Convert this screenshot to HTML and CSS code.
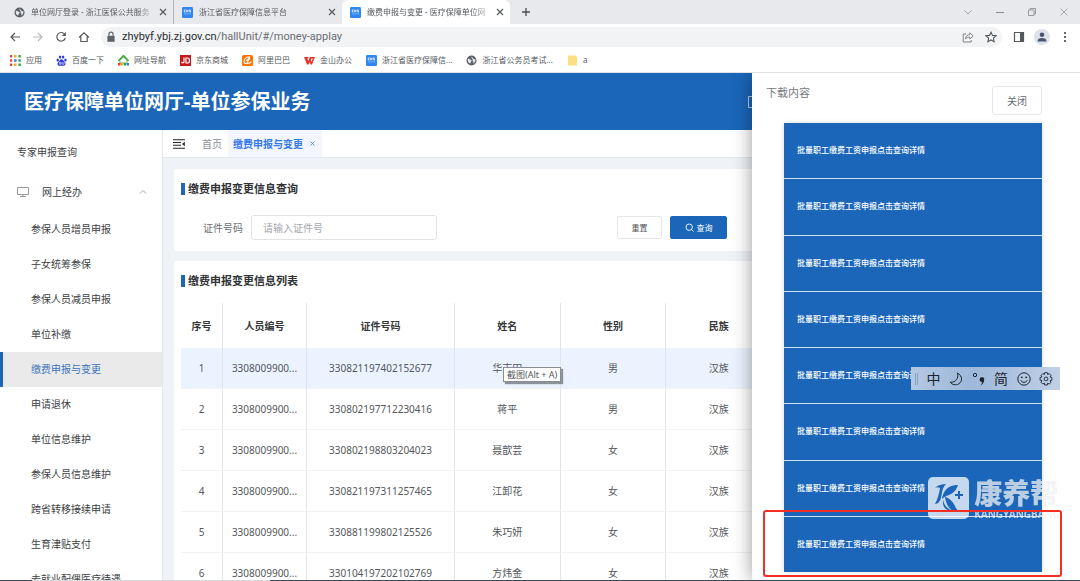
FILE: index.html
```html
<!DOCTYPE html>
<html lang="zh-CN">

	<head>
		<meta charset="UTF-8">
		<title>缴费申报与变更 - 医疗保障单位网厅</title>
		<link rel="stylesheet" href="styles.css">
	</head>

	<body>
		<!-- 公用图标 -->
		<svg class="defs" width="0" height="0">
			<symbol id="globe" viewBox="0 0 12 12">
				<circle cx="6" cy="6" r="5.5" fill="#5f6368" />
				<path d="M2 4.2C3.5 3.8 4 5.2 5.2 5.3c1 .2 1.200 1 .4 1.600C4.800 7.500 5.400 9 4.300 9.300 2.600 8.700 1.600 7 2 4.200zM6 1.500c.2 1.200 1.500.8 1.500 1.900S9.300 4.700 10.300 5c.1 1.800-.7 3.300-2 4.200-.7-.6.300-1.700-.6-2.300-.8-.5-.7-1.500.1-1.900C7 4.500 5.800 3.800 6 1.500z" fill="#e8eaed" />
			</symbol>
			<symbol id="chs" viewBox="0 0 12 12">
				<rect width="12" height="12" rx="1.500" fill="#2f86ee" />
				<path d="M4 3.200H2.500v2.200H4M5 3v2.600M5 4.300h1.600M6.600 3v2.600M9.500 3.200H8v1.100h1.500v1.100H8" fill="none" stroke="#fff" stroke-width=".8" />
				<path d="M2 7.500h8" stroke="#9cc8fa" stroke-width=".7" />
			</symbol>
			<symbol id="close" viewBox="0 0 8 8">
				<path d="M1 1l6 6M7 1L1 7" fill="none" stroke="currentColor" stroke-width="1.200" />
			</symbol>
		</svg>

		<div class="tabs">
			<div class="tab">
				<svg class="ico"><use href="#globe" /></svg>
				<span class="name">单位网厅登录 - 浙江医保公共服务</span>
				<button class="x" aria-label="关闭标签"><svg><use href="#close" /></svg></button>
			</div>
			<div class="tab">
				<svg class="ico"><use href="#chs" /></svg>
				<span class="name">浙江省医疗保障信息平台</span>
				<button class="x" aria-label="关闭标签"><svg><use href="#close" /></svg></button>
			</div>
			<div class="tab on">
				<svg class="ico"><use href="#chs" /></svg>
				<span class="name">缴费申报与变更 - 医疗保障单位网</span>
				<button class="x" aria-label="关闭标签"><svg><use href="#close" /></svg></button>
			</div>
			<button class="plus" aria-label="新标签页"><svg width="10" height="10" viewBox="0 0 10 10"><path d="M5 1v8M1 5h8" stroke="#4a4d51" stroke-width="1.300" /></svg></button>
			<div class="winbtns">
				<button aria-label="搜索标签页"><svg viewBox="0 0 10 10"><path d="M1.500 3.500L5 7l3.500-3.500" fill="none" stroke="#a5a7aa" /></svg></button>
				<button aria-label="最小化"><svg viewBox="0 0 10 10"><path d="M1 5.500h8" stroke="#8b8d90" /></svg></button>
				<button aria-label="还原"><svg viewBox="0 0 10 10"><path d="M1.500 3h5.500v5.500H1.500zM3 3V1.500h5.500V7H7" fill="none" stroke="#999b9e" /></svg></button>
				<button aria-label="关闭"><svg viewBox="0 0 10 10"><path d="M1.500 1.500l7 7M8.500 1.500l-7 7" stroke="#a5a7aa" /></svg></button>
			</div>
		</div>

		<div class="toolbar">
			<button aria-label="后退"><svg viewBox="0 0 12 12"><path d="M11 6H2M6 2L2 6l4 4" fill="none" stroke="#55585c" stroke-width="1.200" /></svg></button>
			<button aria-label="前进"><svg viewBox="0 0 12 12"><path d="M1 6h9M6 2l4 4-4 4" fill="none" stroke="#b8babd" stroke-width="1.200" /></svg></button>
			<button aria-label="刷新"><svg viewBox="0 0 12 12"><path d="M9.800 3.500A4.300 4.300 0 1 0 10.300 7" fill="none" stroke="#55585c" stroke-width="1.200" /><path d="M10.800 1v4H6.800z" fill="#55585c" /></svg></button>
			<button aria-label="主页"><svg viewBox="0 0 12 12"><path d="M1 6.500L6 1.800l5 4.700M2.800 5.500v5h6.400v-5" fill="none" stroke="#55585c" stroke-width="1.200" /></svg></button>
			<div class="address">
				<svg width="8" height="10" viewBox="0 0 8 10"><path d="M1 4h6v5H1z" fill="#5f6368" /><path d="M2.300 4V2.700a1.700 1.700 0 0 1 3.400 0V4" fill="none" stroke="#5f6368" /></svg>
				<span class="url"><b>zhybyf.ybj.zj.gov.cn</b>/hallUnit/#/money-applay</span>
				<button aria-label="分享"><svg viewBox="0 0 12 12"><path d="M4 3H1.200v8h8V9M3.500 8c.3-3 2-4.300 4.300-4.400V1.800L11.200 5 7.800 8V6.200C6 6.200 4.600 6.700 3.500 8z" fill="none" stroke="#77797d" stroke-width=".9" /></svg></button>
				<button aria-label="收藏"><svg viewBox="0 0 12 12"><path d="M6 1.200l1.500 3.200 3.500.4-2.600 2.400.7 3.500L6 9l-3.100 1.700.7-3.500L1 4.800l3.500-.4z" fill="none" stroke="#55585c" stroke-width="1.100" /></svg></button>
			</div>
			<button aria-label="侧边栏"><svg viewBox="0 0 12 12"><path d="M1.500 1.500h9v9h-9z" fill="none" stroke="#55585c" stroke-width="1.200" /><path d="M7 1.500h3.500v9H7z" fill="#55585c" /></svg></button>
			<button class="user" aria-label="用户"><svg viewBox="0 0 12 12"><circle cx="6" cy="3.700" r="2.300" fill="#4a5670" /><path d="M1.500 10.500C1.500 7.800 3.500 7 6 7s4.500.8 4.500 3.500z" fill="#4a5670" /></svg></button>
			<button aria-label="更多"><svg viewBox="0 0 12 12"><path d="M6 1v2M6 5v2M6 9v2" stroke="#55585c" stroke-width="1.800" /></svg></button>
		</div>

		<nav class="marks">
			<a href="#"><svg viewBox="0 0 11 11"><path d="M1 0v11" stroke="#e84335" stroke-width="2.400" stroke-dasharray="2.400 1.900" /><path d="M5.300 0v11" stroke="#f5a623" stroke-width="2.400" stroke-dasharray="2.400 1.900" /><path d="M9.600 0v11" stroke="#34a853" stroke-width="2.400" stroke-dasharray="2.400 1.900" /><path d="M4.100 4.300h2.400v2.400H4.100z" fill="#4285f4" /></svg>应用</a>
			<a href="#"><svg viewBox="0 0 11 11"><g fill="#2c39d8"><ellipse cx="1.700" cy="5" rx="1.200" ry="1.500" /><ellipse cx="4" cy="2" rx="1.200" ry="1.600" /><ellipse cx="7.100" cy="2" rx="1.200" ry="1.600" /><ellipse cx="9.400" cy="5" rx="1.200" ry="1.500" /><path d="M5.500 4.300c1.500 0 2 1.500 3.200 2.700 1.700 1.700.5 4-1.500 3.800-1.200-.2-2.200-.2-3.400 0C1.800 11 .6 8.700 2.300 7c1.200-1.200 1.700-2.700 3.200-2.700z" /></g><path d="M3.500 7.200h1.500v2H3.500zM6.200 7v2.200H8V7" fill="none" stroke="#fff" stroke-width=".6" /></svg>百度一下</a>
			<a href="#"><svg viewBox="0 0 11 11"><path d="M.5 6L5.500.8 10.500 6" fill="none" stroke="#3fa83c" stroke-width="1.800" /><path d="M2 5.500V8h7V5.500" fill="#fff" stroke="#6cbf58" /><path d="M0 8h2.500v2.500H0z" fill="#e8402e" /><path d="M3 8h2.300v2.500H3z" fill="#f5a623" /><path d="M5.800 8h2.300v2.500H5.800z" fill="#28a35c" /><path d="M8.600 8H11v2.500H8.600z" fill="#2d82d8" /></svg>网址导航</a>
			<a href="#"><svg viewBox="0 0 11 11"><path d="M0 0h11v11H0z" fill="#c8161d" /><path d="M4 2.500v4.300c0 1.500-2.300 1.500-2.300 0M6 3v5h1.500c2.700 0 2.700-5 0-5z" fill="none" stroke="#fff" stroke-width="1.200" /></svg>京东商城</a>
			<a href="#"><svg viewBox="0 0 11 11"><rect width="11" height="11" rx="1.500" fill="#ff7300" /><path d="M7.500 2C4.500 1.500 2 4 2 6.500 2 8.500 4 9 5.500 8M4 5.500c2-.3 3-1.500 3.500-3C8 4.500 5 6 5.500 7.500S8.500 8 9.500 6.500" fill="none" stroke="#fff" stroke-width="1.100" /></svg>阿里巴巴</a>
			<a href="#"><svg viewBox="0 0 11 11"><path d="M0 2h5l-1.500 1.600L4.200 6 6 2h5L8 9.500H6.500L5.800 7 4.500 9.500H3z" fill="#e5352c" /><path d="M7.500 3.500h1.300L7.500 7 7 5z" fill="#fff" /></svg>金山办公</a>
			<a href="#"><svg><use href="#chs" /></svg>浙江省医疗保障信...</a>
			<a href="#"><svg><use href="#globe" /></svg>浙江省公务员考试...</a>
			<a href="#"><svg viewBox="0 0 11 11"><path d="M1 .5h7.500L10 2v8.500H1z" fill="#fddf83" /></svg>a</a>
		</nav>

		<div class="app">
			<header>
				<h1>医疗保障单位网厅-单位参保业务</h1>
				<svg width="10" height="12" viewBox="0 0 10 12"><path d="M.5.500h9v11h-9z" fill="none" stroke="#b8d2ee" /></svg>
			</header>
			<div class="body">
				<aside>
					<a class="top" href="#">专家申报查询</a>
					<a class="group" href="#">
						<svg width="12" height="12" viewBox="0 0 12 12"><path d="M.5 1.500h11v7H.5zM6 8.500v2M3 10.500h6" fill="none" stroke="#96999e" /></svg>
						<span>网上经办</span>
						<svg width="8" height="8" viewBox="0 0 8 8"><path d="M1 5.500l3-3 3 3" fill="none" stroke="#9a9da2" stroke-width=".9" /></svg>
					</a>
					<ul>
						<li><a href="#">参保人员增员申报</a></li>
						<li><a href="#">子女统筹参保</a></li>
						<li><a href="#">参保人员减员申报</a></li>
						<li><a href="#">单位补缴</a></li>
						<li class="active"><a href="#">缴费申报与变更</a></li>
						<li><a href="#">申请退休</a></li>
						<li><a href="#">单位信息维护</a></li>
						<li><a href="#">参保人员信息维护</a></li>
						<li><a href="#">跨省转移接续申请</a></li>
						<li><a href="#">生育津贴支付</a></li>
						<li><a href="#">去就业配偶医疗待遇</a></li>
					</ul>
				</aside>

				<main>
					<div class="crumbs">
						<button class="fold" aria-label="收起菜单"><svg width="12" height="10" viewBox="0 0 12 10"><path d="M0 .7h12M0 3.500h8M0 6.300h8M0 9.200h12" stroke="#222" stroke-width="1.100" /><path d="M11.800 2.800v4.400L9 5z" fill="#222" /></svg></button>
						<a href="#">首页</a>
						<a class="cur" href="#">缴费申报与变更<svg><use href="#close" /></svg></a>
					</div>

					<section class="card search">
						<h2>缴费申报变更信息查询</h2>
						<form>
							<label for="idno">证件号码</label>
							<input id="idno" type="text" placeholder="请输入证件号">
							<button type="reset">重置</button>
							<button type="button" class="primary"><svg width="9" height="9" viewBox="0 0 9 9"><circle cx="4.200" cy="4.200" r="3.200" fill="none" stroke="#fff" stroke-width=".9" /><path d="M6.500 6.500l2 2" stroke="#fff" stroke-width=".9" /></svg>查询</button>
						</form>
					</section>

					<section class="card">
						<h2>缴费申报变更信息列表</h2>
						<table>
							<thead>
								<tr>
									<th class="c-no">序号</th>
									<th class="c-person">人员编号</th>
									<th class="c-id">证件号码</th>
									<th>姓名</th>
									<th>性别</th>
									<th>民族</th>
								</tr>
							</thead>
							<tbody>
								<tr class="hover"><td>1</td><td>3308009900...</td><td>330821197402152677</td><td>华志田</td><td>男</td><td>汉族</td></tr>
								<tr><td>2</td><td>3308009900...</td><td>330802197712230416</td><td>蒋平</td><td>男</td><td>汉族</td></tr>
								<tr><td>3</td><td>3308009900...</td><td>330802198803204023</td><td>聂歆芸</td><td>女</td><td>汉族</td></tr>
								<tr><td>4</td><td>3308009900...</td><td>330821197311257465</td><td>江卸花</td><td>女</td><td>汉族</td></tr>
								<tr><td>5</td><td>3308009900...</td><td>330881199802125526</td><td>朱巧妍</td><td>女</td><td>汉族</td></tr>
								<tr><td>6</td><td>3308009900...</td><td>330104197202102769</td><td>方炜金</td><td>女</td><td>汉族</td></tr>
							</tbody>
						</table>
					</section>
				</main>
			</div>

			<!-- 下载抽屉 -->
			<div class="drawer">
				<div class="drawer-head">
					<span>下载内容</span>
					<button>关闭</button>
				</div>
				<div class="files">
					<a href="#">批量职工缴费工资申报点击查询详情</a>
					<a href="#">批量职工缴费工资申报点击查询详情</a>
					<a href="#">批量职工缴费工资申报点击查询详情</a>
					<a href="#">批量职工缴费工资申报点击查询详情</a>
					<a href="#">批量职工缴费工资申报点击查询详情</a>
					<a href="#">批量职工缴费工资申报点击查询详情</a>
					<a href="#">批量职工缴费工资申报点击查询详情</a>
					<a href="#">批量职工缴费工资申报点击查询详情</a>
				</div>
			</div>
		</div>
		<div class="taskbar"></div>

		<div class="tip">截图(Alt + A)</div>

		<!-- 输入法 -->
		<div class="ime">
			<i></i>
			<span>中</span>
			<svg viewBox="0 0 14 14"><path d="M8.500 1c5 2.800 5.200 8.500 1.300 10.800-3 1.800-6.800.9-8.600-1.600C6.500 10.600 10 6.500 8.500 1z" fill="none" stroke="#1c2430" /></svg>
			<svg viewBox="0 0 14 14"><circle cx="3" cy="3" r="1.700" fill="none" stroke="#1c2430" /><path d="M7.600 7.300a2.300 2.300 0 1 1 4.500.9c0 2.400-1.500 4.200-3.700 5.200 1.200-1.200 1.700-2.200 1.700-3.300-1.500.1-2.500-1.100-2.500-2.800z" fill="#1c2430" /></svg>
			<span>简</span>
			<svg viewBox="0 0 14 14"><circle cx="7" cy="7" r="6.200" fill="none" stroke="#1c2430" /><circle cx="4.800" cy="5.300" r=".9" fill="#1c2430" /><circle cx="9.200" cy="5.300" r=".9" fill="#1c2430" /><path d="M3.700 8.300c1.300 2.700 5.300 2.700 6.600 0" fill="none" stroke="#1c2430" /></svg>
			<svg viewBox="0 0 14 14"><path d="M5.700.7h2.600l.4 1.800 1.500-1 1.800 1.900-1 1.500 1.900.6v2.700l-1.900.5 1 1.600-1.800 1.800-1.500-1-.4 1.900H5.700l-.4-1.900-1.500 1L2 10.300l1-1.600-1.900-.5V5.500L3 4.900l-1-1.500 1.800-1.900 1.500 1z" fill="none" stroke="#1c2430" stroke-width=".9" /><circle cx="7" cy="6.900" r="1.900" fill="none" stroke="#1c2430" stroke-width=".9" /></svg>
		</div>

		<div class="brand">
			<svg width="41" height="42" viewBox="0 0 41 42">
				<rect width="41" height="42" rx="5" fill="#fff" />
				<g fill="#1b66b9">
					<path d="M7 11c3-3 7-4 11-4-4 4-4 9-5 14-1 3-3 6-6 6 3-5 4-11 5-16-2-1-3-1-5 0z" />
					<path d="M14 22c1-8 6-14 16-14-2 6-5 8-9 10-3 1-5 2-7 4z" />
					<path d="M17 20c5 1 8 5 10 9 1 3 3 5 6 6h-7c-5-3-8-8-9-15z" />
					<path d="M15 23c1 5 4 9 10 11-7 0-11-4-10-11z" />
					<path d="M30 14h2v3h3v2h-3v3h-2v-3h-3v-2h3z" />
				</g>
			</svg>
			<div>
				<strong>康养帮</strong>
				<small>KANGYANGBANG</small>
			</div>
		</div>
		<div class="mark-box"></div>
	</body>

</html>
```
FILE: styles.css
```css
* {
	margin: 0;
	padding: 0;
	box-sizing: border-box;
}

html,
body {
	height: 100%;
}

body {
	display: flex;
	flex-direction: column;
	position: relative;
	overflow: hidden;
	background: #fff;
	color: #55585c;
	font: 10px/14px "Noto Sans", "Noto Sans CJK SC", sans-serif;
}

ul {
	list-style: none;
}

a {
	color: inherit;
	text-decoration: none;
}

button {
	border: 0;
	background: none;
	color: inherit;
	font: inherit;
}

svg {
	display: block;
	flex: none;
}

.defs {
	position: absolute;
}

/* 浏览器标签 */
.tabs {
	flex: none;
	display: flex;
	height: 24px;
	background: #e8e9ec;
	font-size: 8px;
}

.tab {
	display: flex;
	align-items: center;
	width: 168px;
	padding: 0 6px 0 8px;
}

.tab:first-child {
	width: 174px;
	padding-left: 14px;
	border-right: 1px solid #b4b6ba;
}

.tab.on {
	background: #fff;
	border-radius: 6px 6px 0 0;
}

.tab .ico {
	width: 11px;
	height: 11px;
	margin-right: 6px;
}

.tab .name {
	flex: 1;
	overflow: hidden;
	white-space: nowrap;
	-webkit-mask-image: linear-gradient(to right, #000 85%, transparent);
	mask-image: linear-gradient(to right, #000 85%, transparent);
}

.tab .x,
.tab .x svg {
	width: 8px;
	height: 8px;
}

.tab .x {
	margin-left: 4px;
}

.plus {
	padding: 0 11px;
}

.winbtns {
	display: flex;
	align-items: center;
	gap: 22px;
	margin-left: auto;
	padding-right: 11px;
}

.winbtns svg {
	width: 10px;
	height: 10px;
}

/* 地址栏 */
.toolbar {
	flex: none;
	display: flex;
	align-items: center;
	gap: 11px;
	height: 26px;
	padding: 0 9px;
}

.toolbar svg {
	width: 12px;
	height: 12px;
}

.address {
	flex: 1;
	display: flex;
	align-items: center;
	gap: 11px;
	height: 20px;
	padding: 0 5px 0 4px;
	border-radius: 10px;
	background: #f1f3f4;
}

.address .url {
	flex: 1;
	margin-left: -6px;
	font-family: Roboto, "Noto Sans CJK SC", sans-serif;
	font-size: 11px;
	color: #6a6d71;
}

.address .url b {
	font-weight: normal;
	color: #2a2c30;
}

.address svg:first-child {
	height: 12px;
}

.toolbar .user {
	padding: 2px;
	margin: 0 -2px;
	border-radius: 50%;
	background: #dde1e8;
}

/* 书签 */
.marks {
	flex: none;
	display: flex;
	align-items: center;
	gap: 14px;
	height: 22px;
	padding: 0 0 2px 10px;
	font-size: 8px;
	white-space: nowrap;
}

.marks a {
	display: flex;
	align-items: center;
	gap: 5px;
}

.marks svg {
	width: 11px;
	height: 11px;
}

/* 页面 */
.app {
	flex: 1;
	display: flex;
	flex-direction: column;
	position: relative;
	min-height: 0;
	overflow: hidden;
	border-top: 1px solid #dfe2e5;
}

header {
	flex: none;
	display: flex;
	align-items: center;
	justify-content: space-between;
	height: 57px;
	padding: 0 322px 0 24px;
	background: #1b66b9;
	color: #fff;
}

h1 {
	font-size: 20px;
	line-height: 28px;
}

.body {
	flex: 1;
	display: flex;
	min-height: 0;
}

aside {
	flex: none;
	width: 163px;
	padding-top: 2px;
	border-right: 1px solid #e4e7ea;
	background: #fff;
	color: #3c3e42;
	overflow: hidden;
}

aside .top,
aside .group {
	display: flex;
	align-items: center;
	height: 40px;
	padding: 0 15px 0 17px;
}

aside .group span {
	flex: 1;
	margin-left: 13px;
}

aside li a {
	display: block;
	height: 35px;
	padding-left: 31px;
	line-height: 35px;
}

aside .active a {
	padding-left: 28px;
	border-left: 3px solid #1b66b9;
	background: #eaeaea;
	color: #3a74bd;
}

main {
	flex: 1;
	min-width: 0;
	background: #eff2f6;
}

.crumbs {
	display: flex;
	align-items: center;
	height: 28px;
	padding-left: 10px;
	border-bottom: 1px solid #e4e7eb;
	background: #fff;
	color: #8b8e93;
}

.crumbs a {
	margin-left: 17px;
}

.crumbs .cur {
	display: flex;
	align-items: center;
	gap: 7px;
	height: 27px;
	margin-left: 6px;
	padding: 0 7px 0 5px;
	background: #f3f6fc;
	color: #3378ee;
	font-weight: bold;
}

.crumbs .cur svg {
	width: 5px;
	height: 5px;
}

.card {
	margin: 10px 0 0 11px;
	padding: 14px 8px 0 7px;
	border-radius: 2px;
	background: #fff;
}

.crumbs + .card {
	margin-top: 11px;
	padding-bottom: 11px;
}

h2 {
	padding-left: 3px;
	border-left: 4px solid #1b66b9;
	color: #303236;
	font-size: 11px;
	line-height: 12px;
}

form {
	display: flex;
	align-items: center;
	width: 546px;
	margin-top: 20px;
}

label {
	margin: 0 8px 0 22px;
	color: #6c6f74;
}

input {
	width: 186px;
	height: 25px;
	margin-right: auto;
	padding: 0 11px;
	border: 1px solid #e0e2e6;
	border-radius: 3px;
	font: inherit;
}

input::placeholder {
	color: #a3a6ab;
}

form button {
	width: 45px;
	height: 23px;
	border: 1px solid #e4e6ea;
	border-radius: 2px;
	font-size: 8px;
}

form .primary {
	display: flex;
	align-items: center;
	justify-content: center;
	gap: 3px;
	width: 57px;
	margin-left: 8px;
	border-color: #1b66b9;
	background: #1b66b9;
	color: #fff;
}

table {
	width: 591px;
	margin-top: 16px;
	table-layout: fixed;
	border-collapse: separate;
	border-spacing: 0;
	text-align: center;
}

th {
	height: 45px;
	border-right: 1px solid #e2e4e8;
	color: #35373b;
	font-weight: bold;
}

td {
	height: 41px;
	border-right: 1px solid #e2e4e8;
	border-bottom: 1px solid #f1f2f4;
}

.c-no {
	width: 42px;
}

.c-person {
	width: 84px;
}

.c-id {
	width: 148px;
}

.hover td {
	background: #eaf3ff;
}

/* 抽屉 */
.drawer {
	position: absolute;
	top: 0;
	right: 0;
	bottom: 0;
	display: flex;
	flex-direction: column;
	width: 328px;
	padding: 13px 38px 8px 14px;
	background: #fff;
	box-shadow: 0 0 18px rgba(0, 0, 0, .4);
}

.drawer-head {
	display: flex;
	justify-content: space-between;
	margin-bottom: 8px;
	color: #77797d;
	font-size: 11px;
}

.drawer-head button {
	width: 50px;
	height: 29px;
	border: 1px solid #e6e8eb;
	border-radius: 3px;
	color: #66696e;
	font-size: 10px;
}

.files {
	flex: 1;
	display: flex;
	flex-direction: column;
	gap: 1px;
	margin-left: 18px;
	background: #d4e0f0;
	box-shadow: 0 0 5px rgba(0, 0, 0, .15);
}

.files a {
	flex: 1;
	display: flex;
	align-items: center;
	padding: 0 0 1px 13px;
	background: #1b66b9;
	color: #fff;
	font-size: 8px;
	font-weight: 500;
}

.taskbar {
	flex: none;
	height: 1px;
	background: linear-gradient(to right, #3a4a5e 3%, #d8dadd 3%, #d8dadd 25%, #3a4a5e 25%);
}

/* 浮层 */
.tip {
	position: absolute;
	left: 503px;
	top: 367px;
	padding: 0 3px;
	border: 1px solid #8a8c90;
	background: #fff;
	box-shadow: 2px 2px 1px rgba(0, 0, 0, .4);
	font-size: 9px;
	line-height: 13px;
}

.ime {
	position: absolute;
	top: 367px;
	right: 20px;
	display: flex;
	align-items: center;
	justify-content: space-between;
	width: 149px;
	height: 23px;
	padding: 0 7px 0 4px;
	background: linear-gradient(to right, #b4c8e2, #9db8da 40%, #c0d0e6);
	color: #1c2430;
	font-size: 14px;
}

.ime i {
	width: 3px;
	height: 12px;
	border: 1px solid #8ca2c0;
	border-width: 0 1px;
}

.ime svg {
	width: 14px;
	height: 14px;
}

.brand {
	position: absolute;
	right: 20px;
	bottom: 62px;
	display: flex;
	gap: 5px;
	color: #f1f1f1;
	opacity: .75;
}

.brand strong,
.brand small {
	display: block;
}

.brand strong {
	font-size: 28px;
	font-weight: 900;
	line-height: 33px;
}

.brand small {
	font-size: 10px;
	font-weight: bold;
	line-height: 8px;
}

.mark-box {
	position: absolute;
	right: 18px;
	bottom: 4px;
	width: 299px;
	height: 67px;
	border: 2px solid #f52e25;
	border-radius: 3px;
}
```
